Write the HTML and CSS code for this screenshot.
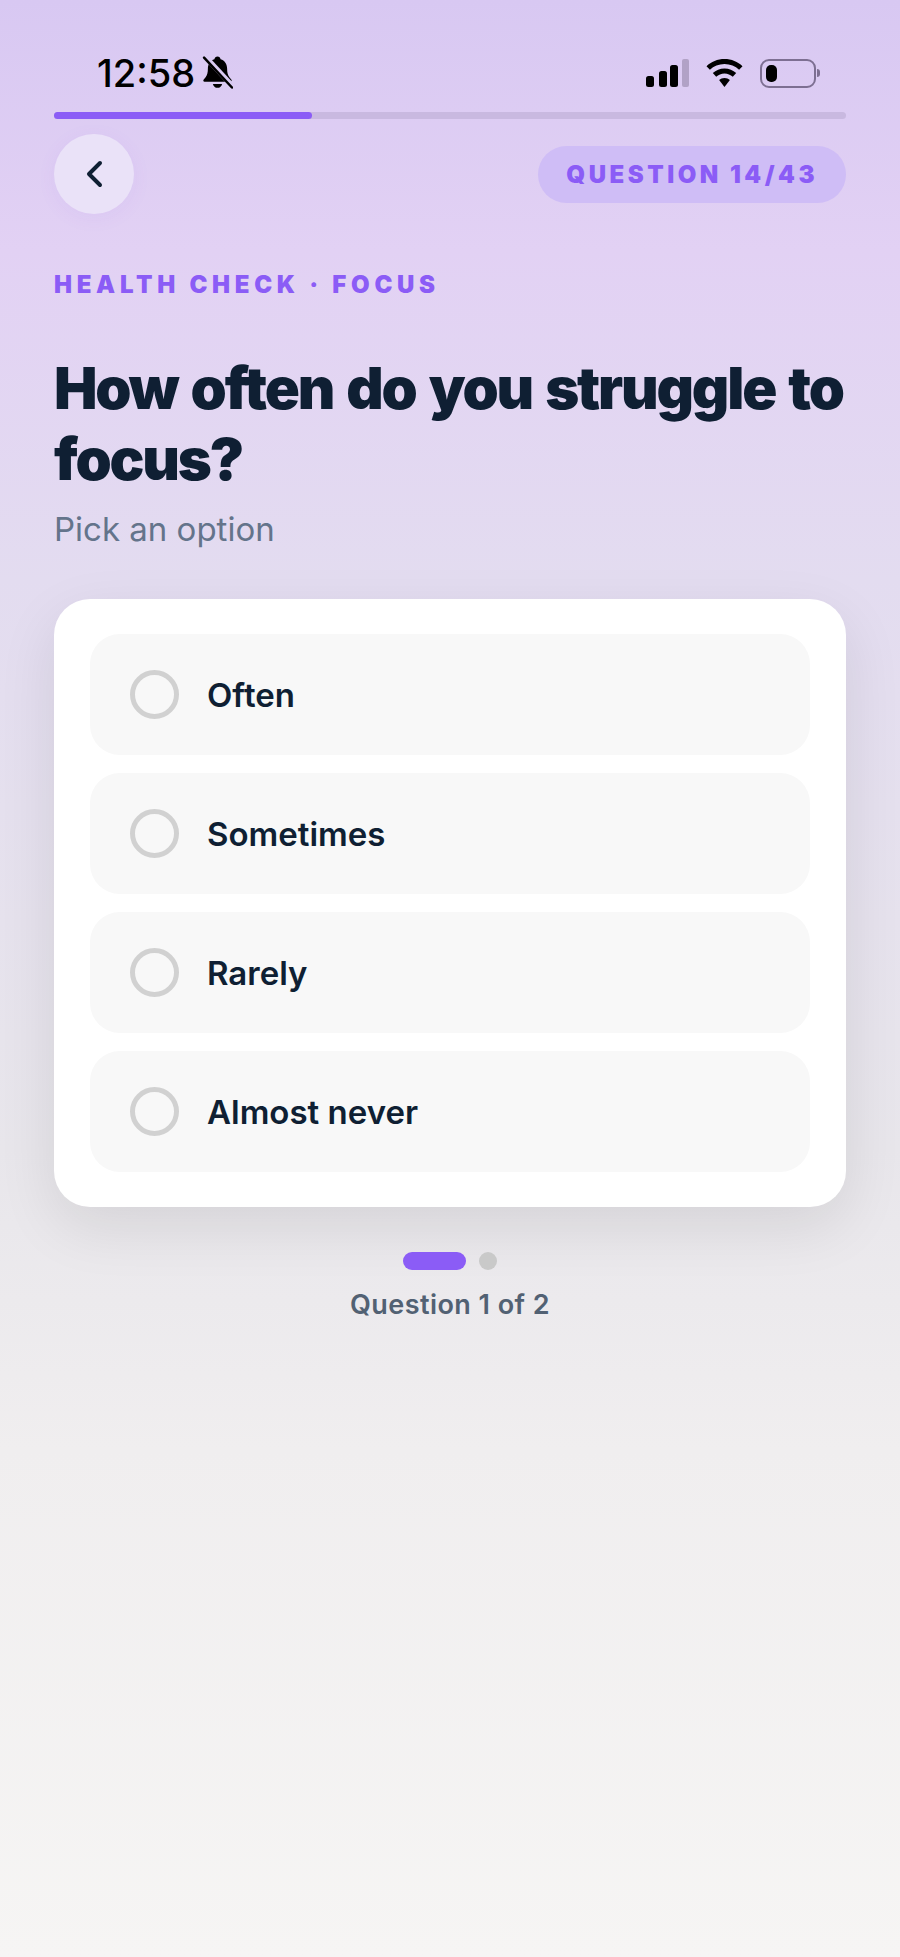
FILE: index.html
```html
<!DOCTYPE html>
<html lang="en">
<head>
    <meta charset="UTF-8">
    <meta name="viewport" content="width=device-width, initial-scale=1.0">
    <title>Health check</title>
    <link rel="stylesheet" href="styles.css">
</head>
<body>
    <div class="page">
        <div class="status">
            <div class="status-left">
                <span class="time">12:58</span>
                <svg class="bell" width="31" height="34" viewBox="0 0 30 32">
                    <path d="M15 1c1.600 0 2.800 1.100 3 2.700 4 1.200 6.300 4.700 6.300 9 0 4 .6 6.300 2.200 8.300l2 2.500c.6.800.1 1.900-.9 1.900H2.400c-1 0-1.500-1.100-.9-1.900l2-2.500c1.600-2 2.200-4.300 2.200-8.300 0-4.300 2.300-7.800 6.300-9C12.200 2.100 13.400 1 15 1z"/>
                    <path d="M10.500 27.500h9c-.4 2.300-2.300 3.800-4.500 3.800s-4.100-1.500-4.500-3.800z"/>
                    <path d="M3 1l26 28" stroke="#d9caf2" stroke-width="5"/>
                    <path d="M2 2l27 29" stroke="#000" stroke-width="2.400" stroke-linecap="round"/>
                </svg>
            </div>
            <div class="status-right">
                <svg width="43" height="28" viewBox="0 0 43 28">
                    <rect x="0" y="17" width="8" height="11" rx="2.500"/>
                    <rect x="13" y="12" width="8" height="16" rx="2.500"/>
                    <rect x="24" y="6" width="8" height="22" rx="2.500"/>
                    <rect x="36" y="0" width="7" height="28" rx="2" fill="#b1a2c6"/>
                </svg>
                <svg width="37" height="28" viewBox="0 0 37 28">
                    <path d="M18.500 0C11.500 0 5.200 2.700.5 7.200l3.400 3.600C7.700 7.200 12.800 5 18.500 5s10.800 2.200 14.600 5.800l3.400-3.600C31.800 2.700 25.500 0 18.500 0z"/>
                    <path d="M18.500 9.500c-4.500 0-8.600 1.700-11.700 4.600l3.400 3.600c2.200-2 5.100-3.300 8.300-3.300s6.100 1.300 8.300 3.300l3.400-3.600c-3.100-2.900-7.200-4.600-11.700-4.600z"/>
                    <path d="M18.500 19c-2.100 0-4 .8-5.400 2.100l5.400 6.900 5.400-6.900c-1.400-1.300-3.300-2.100-5.400-2.100z"/>
                </svg>
                <div class="battery">
                    <div class="battery-fill"></div>
                </div>
            </div>
        </div>

        <div class="progress"><div class="progress-fill"></div></div>

        <div class="topbar">
            <div class="back">
                <svg width="20" height="30" viewBox="0 0 20 30" fill="none">
                    <path d="M16 4L5 15l11 11" stroke="#0f1f33" stroke-width="4" stroke-linecap="round" stroke-linejoin="round"/>
                </svg>
            </div>
            <div class="badge">QUESTION 14/43</div>
        </div>

        <div class="eyebrow">HEALTH CHECK · FOCUS</div>
        <h1>How often do you struggle to focus?</h1>
        <p class="hint">Pick an option</p>

        <div class="card">
            <div class="option"><span class="radio"></span>Often</div>
            <div class="option"><span class="radio"></span>Sometimes</div>
            <div class="option"><span class="radio"></span>Rarely</div>
            <div class="option"><span class="radio"></span>Almost never</div>
        </div>

        <div class="dots">
            <span class="dot-active"></span>
            <span class="dot"></span>
        </div>
        <div class="counter">Question 1 of 2</div>
    </div>
</body>
</html>
```

FILE: styles.css
```css
* {
    margin: 0;
    padding: 0;
    box-sizing: border-box;
}

body {
    height: 1957px;
    overflow: hidden;
    background: linear-gradient(180deg, #d8c8f2 0, #e2d1f4 250px, #e3dcf0 580px, #e8e6eb 1150px, #f0eeef 1450px, #f6f5f4 1957px);
    font-family: Inter, 'Noto Sans', sans-serif;
    color: #0f1f33;
}

.page {
    padding: 0 54px;
}

.status {
    height: 112px;
    display: flex;
    justify-content: space-between;
    padding: 55px 30px 0 43px;
}

.status-left {
    display: flex;
    align-items: flex-start;
    gap: 7px;
}

.time {
    font-size: 38px;
    line-height: 36px;
    font-weight: 500;
    color: #000;
}

.status-right {
    display: flex;
    align-items: flex-start;
    gap: 17px;
    padding-top: 4px;
}

.battery {
    position: relative;
    width: 56px;
    height: 29px;
    border: 2.500px solid #7d6f92;
    border-radius: 9px;
    padding: 4px;
}

.battery:after {
    content: "";
    position: absolute;
    left: 55px;
    top: 8px;
    width: 3px;
    height: 8px;
    background: #7d6f92;
    border-radius: 0 4px 4px 0;
}

.battery-fill {
    width: 11px;
    height: 100%;
    background: #000;
    border-radius: 5px;
}

.progress {
    height: 7px;
    background: #c9b9e0;
    border-radius: 4px;
}

.progress-fill {
    width: 32.6%;
    height: 100%;
    background: #8b5cf6;
    border-radius: 4px;
}

.topbar {
    display: flex;
    justify-content: space-between;
    align-items: center;
    margin-top: 15px;
}

.back {
    width: 80px;
    height: 80px;
    border-radius: 50%;
    background: #eae2f8;
    box-shadow: 0 4px 20px rgba(139, 92, 246, 0.06);
    display: flex;
    justify-content: center;
    align-items: center;
}

.badge {
    height: 57px;
    line-height: 57px;
    padding: 0 28px;
    border-radius: 29px;
    background: #cfbdf6;
    color: #8b5cf6;
    font-size: 24px;
    font-weight: 900;
    letter-spacing: 3.500px;
}

.eyebrow {
    margin-top: 56px;
    color: #8b5cf6;
    font-size: 24px;
    line-height: 30px;
    font-weight: 900;
    letter-spacing: 4.700px;
}

h1 {
    margin-top: 53px;
    font-size: 58px;
    line-height: 71px;
    font-weight: 900;
    letter-spacing: -2.200px;
    word-spacing: 3.800px;
}

.hint {
    margin-top: 14px;
    color: #64748b;
    font-size: 33px;
    line-height: 40px;
}

.card {
    margin-top: 50px;
    padding: 35px 36px;
    background: #fff;
    border-radius: 36px;
    box-shadow: 0 20px 60px rgba(0, 0, 0, 0.09);
    display: flex;
    flex-direction: column;
    gap: 18px;
}

.option {
    height: 121px;
    padding: 0 40px;
    border-radius: 30px;
    background: #f8f8f8;
    display: flex;
    align-items: center;
    gap: 28px;
    font-size: 33px;
    font-weight: 600;
}

.radio {
    width: 49px;
    height: 49px;
    border: 5px solid #d1d1d1;
    border-radius: 50%;
}

.dots {
    margin-top: 45px;
    display: flex;
    justify-content: center;
    gap: 13px;
}

.dot-active {
    width: 63px;
    height: 18px;
    border-radius: 9px;
    background: #8b5cf6;
}

.dot {
    width: 18px;
    height: 18px;
    border-radius: 50%;
    background: #c9c9c9;
}

.counter {
    margin-top: 18px;
    text-align: center;
    color: #526173;
    font-size: 27px;
    line-height: 34px;
    font-weight: 600;
    letter-spacing: 0.450px;
}
```
